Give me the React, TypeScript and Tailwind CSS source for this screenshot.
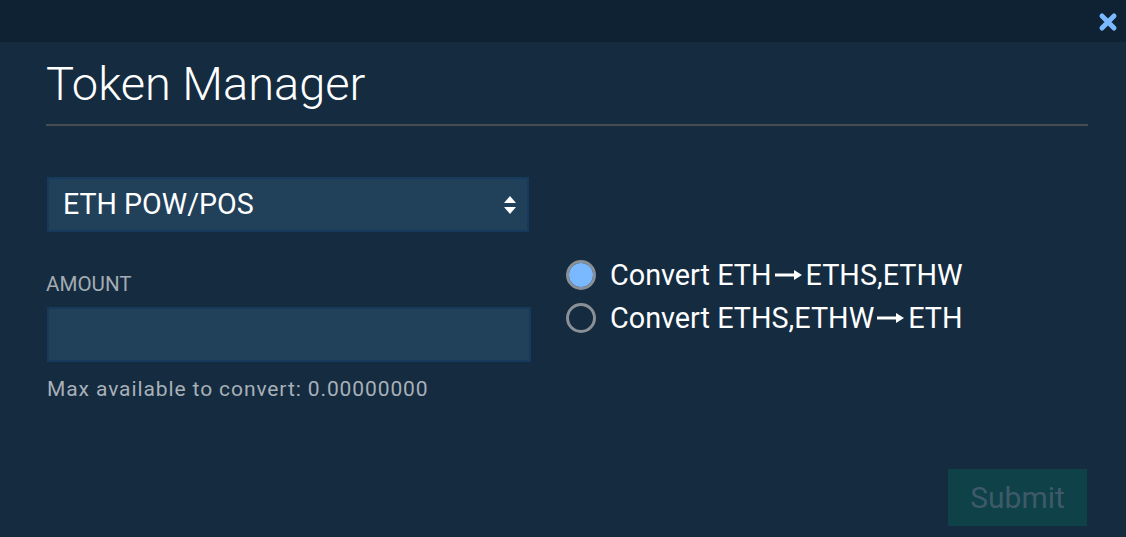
import { useState } from 'react';

const OPTIONS = [
    { id: 'to', from: 'ETH', to: 'ETHS,ETHW' },
    { id: 'from', from: 'ETHS,ETHW', to: 'ETH' },
];

export default function App() {
    const [mode, setMode] = useState('to');

    return (
        <main className="h-[537px] w-[1126px] bg-[#142b40] font-['Roboto',sans-serif] overflow-hidden">
            {/* top bar */}
            <div className="h-[42px] bg-[#0f2233] flex justify-end items-start pr-[8px] pt-[12px]">
                <svg width="20" height="20" viewBox="0 0 20 20">
                    <path d="M4 4 L16 16 M16 4 L4 16" stroke="#7ab8ff" strokeWidth="5" strokeLinecap="round" />
                </svg>
            </div>

            <div className="pl-[46px] pr-[38px]">
                <h1 className="text-[47px] leading-none font-light text-white pt-[18px] pb-[17px]">
                    Token Manager
                </h1>
                <div className="h-[2px] bg-[#474d52]"></div>

                <div className="flex mt-[51px]">
                    {/* left column */}
                    <div className="w-[485px] pl-[1px]">
                        <div className="h-[55px] w-[482px] bg-[#21405a] border-2 border-[#173a5c] flex items-center justify-between pl-[14px] pr-[10px]">
                            <span className="text-[28.6px] text-white">ETH POW/POS</span>
                            <svg width="14" height="20" viewBox="0 0 14 20">
                                <path d="M7 1 L13 8 L1 8 Z" fill="#fff" />
                                <path d="M1 12 L13 12 L7 19 Z" fill="#fff" />
                            </svg>
                        </div>

                        <div className="mt-[42px] -ml-[1px] text-[20.6px] leading-none text-[#a3abb3]">AMOUNT</div>
                        <input
                            className="mt-[12px] h-[55px] w-[484px] bg-[#21405a] border-2 border-[#173a5c] outline-none text-white text-[22px] px-3"
                        />
                        <div className="mt-[17px] text-[21px] leading-none text-[#a8b0b8] tracking-[0.9px]">
                            Max available to convert: 0.00000000
                        </div>
                    </div>

                    {/* right column */}
                    <div className="ml-[35px] mt-[83px] flex flex-col gap-[13px]">
                        {OPTIONS.map((o) => (
                            <label key={o.id} className="flex items-center gap-[14px] cursor-pointer h-[30px]" onClick={() => setMode(o.id)}>
                                <span className="w-[30px] h-[30px] rounded-full border-[3px] border-[#8a9096] flex items-center justify-center">
                                    {mode === o.id && <span className="w-[24px] h-[24px] rounded-full bg-[#7ab8ff]"></span>}
                                </span>
                                <span className="text-[28.8px] leading-none text-white flex items-center">
                                    Convert {o.from}
                                    <svg width="28" height="12" viewBox="0 0 28 12" className="mx-[3px]">
                                        <path d="M0 6 H20" stroke="#fff" strokeWidth="3" />
                                        <path d="M19 1 L27 6 L19 11 Z" fill="#fff" />
                                    </svg>
                                    {o.to}
                                </span>
                            </label>
                        ))}
                    </div>
                </div>

                <div className="flex justify-end mt-[69px]">
                    <button className="h-[57px] w-[139px] bg-[#0e4148] text-[30px] text-[#3e5a6a] mr-[1px]">Submit</button>
                </div>
            </div>
        </main>
    );
}
